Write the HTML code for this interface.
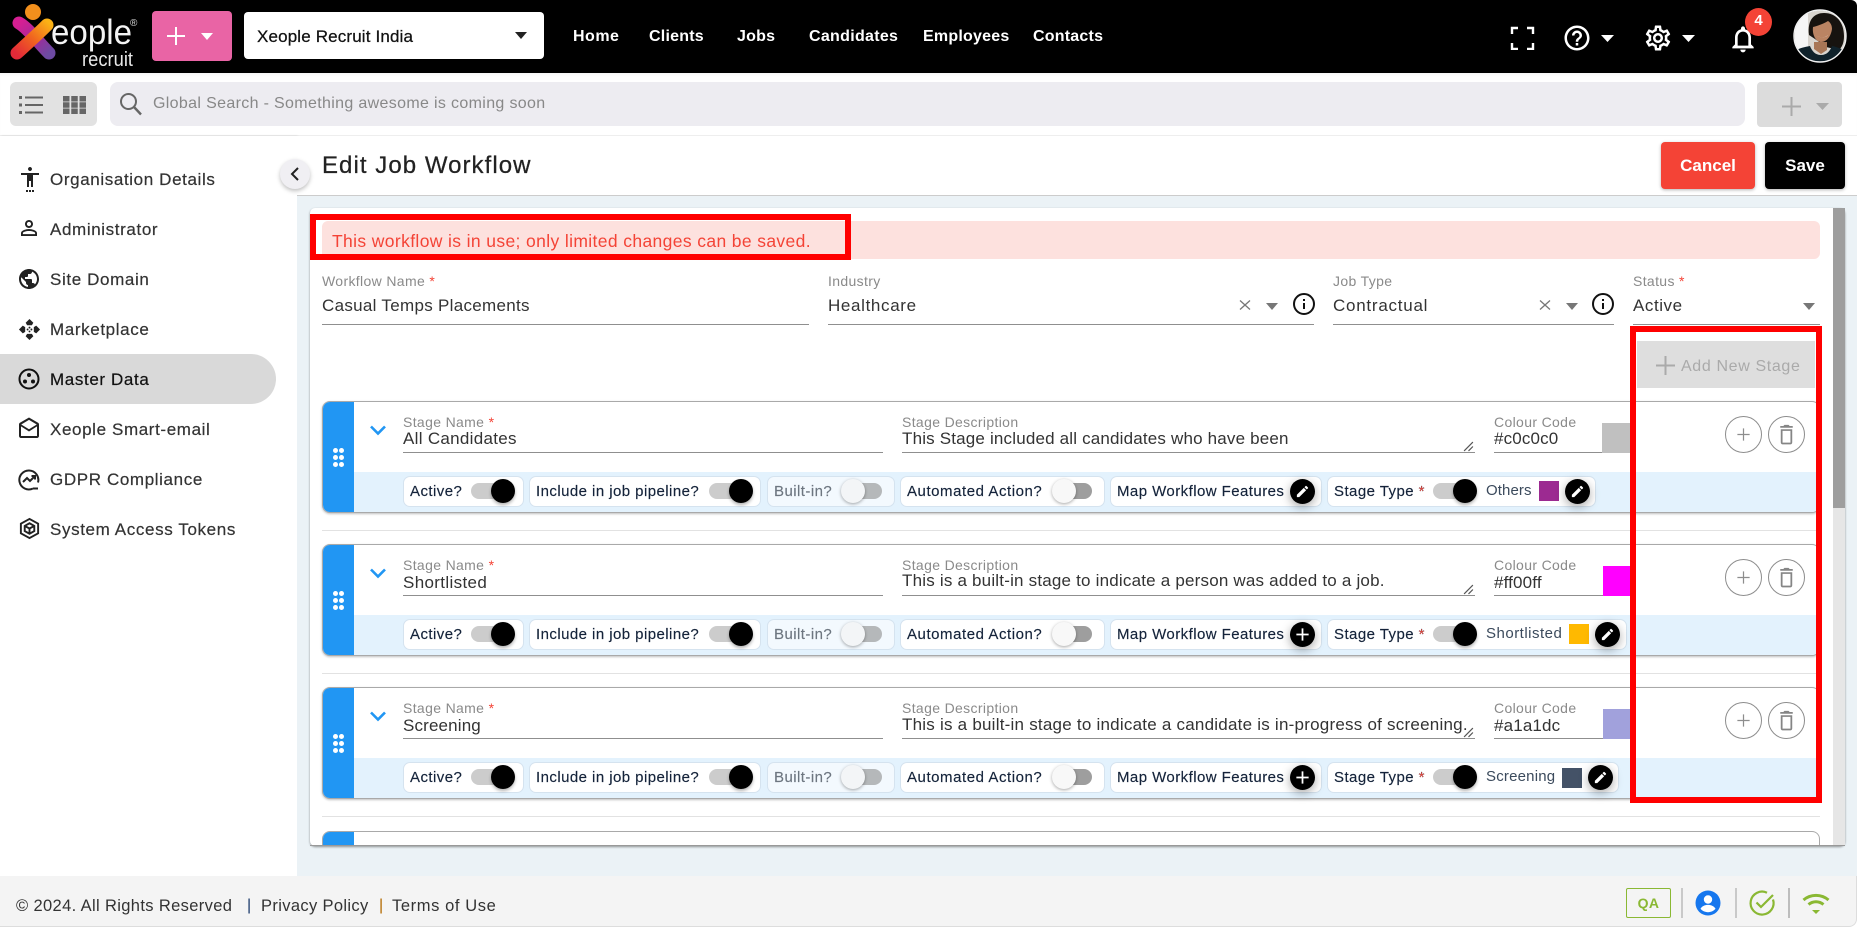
<!DOCTYPE html>
<html><head><meta charset="utf-8"><title>Edit Job Workflow</title>
<style>
html,body{margin:0;padding:0;width:1860px;height:927px;overflow:hidden;background:#fff;font-family:"Liberation Sans",Arial,sans-serif;color:#222}
div,span,svg{box-sizing:border-box}
.a,.t,.s>*,svg.i{position:absolute}
.t{white-space:nowrap;line-height:20px;height:20px}
.m{-webkit-text-stroke:.25px currentColor}
.nav{color:#fff;font-size:16px;font-weight:bold;top:27px;letter-spacing:.22px}
.side{font-size:17px;letter-spacing:.62px;color:#333;left:50px;-webkit-text-stroke:.2px #333}
.lab{font-size:14px;letter-spacing:.35px;color:#8a8a8a}
.val{font-size:17px;letter-spacing:.15px;color:#333}
.star{color:#f44336}
.ul{position:absolute;height:1px;background:#8f8f8f}
.s{position:absolute;left:0;width:1860px;height:0}
.card{left:322px;top:401px;width:1498px;height:112px;border:1px solid #a9a9a9;border-radius:8px;background:#fff;box-shadow:0 1px 2px rgba(0,0,0,.25);overflow:hidden}
.strip{position:absolute;left:0;top:0;bottom:0;width:31px;background:#2196f3}
.band{position:absolute;left:31px;right:0;top:70px;bottom:0;background:#e3f2fd}
.dot{width:5px;height:5px;border-radius:50%;background:#fff}
.pill{top:476px;height:31px;background:#fff;border:1px solid #d5e3ef;border-radius:7px}
.ptx{font-size:15px;letter-spacing:.44px;color:#14233a;top:482px;-webkit-text-stroke:.15px #14233a}
.stx{top:481px;font-size:15px;color:#3b4a5c}
.tr{height:16px;top:483px;border-radius:8px;background:#ccc}
.th{width:24px;height:24px;top:479px;border-radius:50%;background:#000;box-shadow:0 2px 3px rgba(0,0,0,.3)}
.off{background:#f8f8f8;box-shadow:0 1px 3px rgba(0,0,0,.35)}
.ed{width:25px;height:25px;top:479px;border-radius:50%;background:#000;box-shadow:0 3px 10px rgba(0,0,0,.35)}
.rd{width:37px;height:37px;top:416px;border:1px solid #8d8d8d;border-radius:50%;background:#fff}
.sep{left:322px;width:1498px;height:1px;background:#e2e2e2}
.red{position:absolute;border:6px solid #f00}
</style></head>
<body>
<svg width="0" height="0" style="position:absolute">
<defs>
<symbol id="edit" viewBox="0 0 24 24"><path fill="#fff" d="M3 17.25V21h3.75L17.81 9.94l-3.75-3.75L3 17.25zM20.71 7.04c.39-.39.39-1.02 0-1.41l-2.34-2.34c-.39-.39-1.02-.39-1.41 0l-1.83 1.83 3.75 3.75 1.83-1.83z"/></symbol>
<symbol id="plus" viewBox="0 0 24 24"><path fill="#fff" d="M19 13h-6v6h-2v-6H5v-2h6V5h2v6h6v2z"/></symbol>
<symbol id="gplus" viewBox="0 0 24 24"><path fill="#8d8d8d" d="M19 12.7h-6.3V19h-1.4v-6.3H5v-1.4h6.3V5h1.4v6.3H19z"/></symbol>
<symbol id="trash" viewBox="0 0 24 24"><path fill="#858585" d="M6.5 19.500c0 1.100.8 2 1.800 2h7.400c1 0 1.800-.9 1.800-2V7h-11zM8.200 8.500h7.600v11.300H8.200zM15 3.800l-1-1h-4l-1 1H6v1.700h12V3.800z"/></symbol>
<symbol id="chev" viewBox="0 0 24 24"><path fill="none" stroke="#2196f3" stroke-width="2.6" d="M5 8.500l7 7 7-7"/></symbol>
<symbol id="info" viewBox="0 0 24 24"><circle cx="12" cy="12" r="10" fill="none" stroke="#111" stroke-width="2"/><path fill="#111" d="M11 11h2v6h-2zM11 7h2v2h-2z"/></symbol>
<symbol id="rz" viewBox="0 0 10 10"><path stroke="#555" stroke-width="1.1" d="M1 9L9 1M5 9l4-4"/></symbol>
<symbol id="clr" viewBox="0 0 12 10"><path stroke="#777" stroke-width="1.300" d="M1 .5l10 9M11 .5l-10 9"/></symbol>
</defs>
</svg>

<!-- header -->
<div class="a" style="left:0;top:0;width:1857px;height:73px;background:#000;border-top-right-radius:6px"></div>
<svg class="i" style="left:0;top:0" width="145" height="73" viewBox="0 0 145 73">
<defs>
<linearGradient id="g1" x1="0" y1="0" x2="1" y2="1"><stop offset="0" stop-color="#d61f93"/><stop offset=".55" stop-color="#a02a9b"/><stop offset="1" stop-color="#6d4aa3"/></linearGradient>
<linearGradient id="g2" gradientUnits="userSpaceOnUse" x1="48" y1="22" x2="17" y2="54"><stop offset="0" stop-color="#fbb215"/><stop offset=".5" stop-color="#f0651f"/><stop offset="1" stop-color="#e32a38"/></linearGradient>
</defs>
<path d="M19 23C28 28 38 42 49 53" stroke="url(#g1)" stroke-width="13" stroke-linecap="round" fill="none"/>
<path d="M47 25C38 34 28 43 17 53" stroke="url(#g2)" stroke-width="13" stroke-linecap="round" fill="none"/>
<circle cx="33" cy="12" r="8" fill="#f28f1c"/>
<text x="51" y="44" font-family="Liberation Sans" font-size="35" fill="#f4f4f4" textLength="81" lengthAdjust="spacingAndGlyphs">eople</text>
<text x="130" y="26" font-family="Liberation Sans" font-size="10" fill="#ddd">®</text>
<text x="82" y="66" font-family="Liberation Sans" font-size="20" fill="#e8e8e8" textLength="51" lengthAdjust="spacingAndGlyphs">recruit</text>
</svg>
<div class="a" style="left:152px;top:11px;width:80px;height:50px;background:#e964a5;border-radius:4px"></div>
<svg class="i" style="left:166px;top:26px" width="20" height="20" viewBox="0 0 20 20"><path fill="#fff" d="M9 1h2v8h8v2h-8v8H9v-8H1V9h8z"/></svg>
<svg class="i" style="left:200px;top:33px" width="14" height="8" viewBox="0 0 14 8"><path fill="#fff" d="M1 0h12L7 7z"/></svg>
<div class="a" style="left:244px;top:12px;width:300px;height:47px;background:#fff;border-radius:4px"></div>
<div class="t m" style="left:257px;top:27px;font-size:17px;letter-spacing:.15px;color:#111">Xeople Recruit India</div>
<svg class="i" style="left:514px;top:32px" width="14" height="8" viewBox="0 0 14 8"><path fill="#222" d="M1 0h12L7 7z"/></svg>
<div class="t nav" style="left:573px;letter-spacing:.5px">Home</div>
<div class="t nav" style="left:649px">Clients</div>
<div class="t nav" style="left:737px">Jobs</div>
<div class="t nav" style="left:809px;letter-spacing:.3px">Candidates</div>
<div class="t nav" style="left:923px">Employees</div>
<div class="t nav" style="left:1033px">Contacts</div>
<svg class="i" style="left:1510px;top:26px" width="25" height="24" viewBox="0 0 25 24"><path fill="none" stroke="#fff" stroke-width="2.4" d="M2 8V2h6M17 2h6v6M23 17v6h-6M8 23H2v-6"/></svg>
<svg class="i" style="left:1562px;top:23px" width="30" height="30" viewBox="0 0 24 24"><path fill="#fff" d="M11 18h2v-2h-2v2zm1-16C6.48 2 2 6.48 2 12s4.48 10 10 10 10-4.48 10-10S17.52 2 12 2zm0 18c-4.41 0-8-3.59-8-8s3.59-8 8-8 8 3.59 8 8-3.59 8-8 8zm0-14c-2.21 0-4 1.79-4 4h2c0-1.1.9-2 2-2s2 .9 2 2c0 2-3 1.75-3 5h2c0-2.25 3-2.5 3-5 0-2.21-1.79-4-4-4z"/></svg>
<svg class="i" style="left:1601px;top:35px" width="13" height="7" viewBox="0 0 13 7"><path fill="#fff" d="M0 0h13L6.5 7z"/></svg>
<svg class="i" style="left:1643px;top:23px" width="30" height="30" viewBox="0 0 24 24"><path fill="#fff" d="M19.43 12.98c.04-.32.07-.64.07-.98 0-.34-.03-.66-.07-.98l2.11-1.65c.19-.15.24-.42.12-.64l-2-3.46c-.09-.16-.26-.25-.44-.25-.06 0-.12.01-.17.03l-2.49 1c-.52-.4-1.08-.73-1.69-.98l-.38-2.65C14.46 2.18 14.25 2 14 2h-4c-.25 0-.46.18-.49.42l-.38 2.65c-.61.25-1.17.59-1.69.98l-2.49-1c-.06-.02-.12-.03-.18-.03-.17 0-.34.09-.43.25l-2 3.46c-.13.22-.07.49.12.64l2.11 1.65c-.04.32-.07.65-.07.98 0 .33.03.66.07.98l-2.11 1.65c-.19.15-.24.42-.12.64l2 3.46c.09.16.26.25.44.25.06 0 .12-.01.17-.03l2.49-1c.52.4 1.08.73 1.69.98l.38 2.65c.03.24.24.42.49.42h4c.25 0 .46-.18.49-.42l.38-2.65c.61-.25 1.17-.59 1.69-.98l2.49 1c.06.02.12.03.18.03.17 0 .34-.09.43-.25l2-3.46c.12-.22.07-.49-.12-.64l-2.11-1.65zm-1.98-1.71c.04.31.05.52.05.73 0 .21-.02.43-.05.73l-.14 1.13.89.7 1.08.84-.7 1.21-1.27-.51-1.04-.42-.9.68c-.43.32-.84.56-1.25.73l-1.06.43-.16 1.13-.2 1.35h-1.4l-.19-1.35-.16-1.13-1.06-.43c-.43-.18-.83-.41-1.23-.71l-.91-.7-1.06.43-1.27.51-.7-1.21 1.08-.84.89-.7-.14-1.13c-.03-.31-.05-.54-.05-.74s.02-.43.05-.73l.14-1.13-.89-.7-1.08-.84.7-1.21 1.27.51 1.04.42.9-.68c.43-.32.84-.56 1.25-.73l1.06-.43.16-1.13.2-1.35h1.39l.19 1.35.16 1.13 1.06.43c.43.18.83.41 1.23.71l.91.7 1.06-.43 1.27-.51.7 1.21-1.07.85-.89.7.14 1.13zM12 8c-2.21 0-4 1.79-4 4s1.79 4 4 4 4-1.79 4-4-1.79-4-4-4zm0 6c-1.1 0-2-.9-2-2s.9-2 2-2 2 .9 2 2-.9 2-2 2z"/></svg>
<svg class="i" style="left:1682px;top:35px" width="13" height="7" viewBox="0 0 13 7"><path fill="#fff" d="M0 0h13L6.5 7z"/></svg>
<svg class="i" style="left:1727px;top:23px" width="32" height="32" viewBox="0 0 24 24"><path fill="#fff" d="M12 22c1.1 0 2-.9 2-2h-4c0 1.1.9 2 2 2zm6-6v-5c0-3.07-1.63-5.64-4.5-6.32V4c0-.83-.67-1.5-1.5-1.5s-1.5.67-1.5 1.5v.68C7.64 5.36 6 7.92 6 11v5l-2 2v1h16v-1l-2-2zm-2 1H8v-6c0-2.48 1.51-4.5 4-4.5s4 2.02 4 4.5v6z"/></svg>
<div class="a" style="left:1745px;top:8px;width:27px;height:28px;border-radius:50%;background:#f44336"></div>
<div class="t" style="left:1745px;top:11px;width:27px;text-align:center;color:#fff;font-weight:bold;font-size:15px">4</div>
<svg class="i" style="left:1793px;top:9px" width="54" height="54" viewBox="0 0 54 54">
<defs><clipPath id="av"><circle cx="27" cy="27" r="25.5"/></clipPath></defs>
<g clip-path="url(#av)"><rect width="54" height="54" fill="#d9d5cf"/><rect x="2" y="4" width="13" height="36" fill="#f6f6f6"/>
<path d="M16 26C14 10 22 4 31 4c12 0 20 9 20 23 0 7-2 11-5 14L33 38 22 30z" fill="#17130f"/>
<path d="M20 18c4-1 10-3 15-6 3 2 4 5 4 8-1 7-5 13-11 13-5 0-9-7-8-15z" fill="#bb8463"/>
<path d="M23 26c3 3 9 3 12 0-2 3-9 3-12 0z" fill="#fff"/>
<path d="M21 33h13v8l-6 4-7-5z" fill="#a87656"/>
<path d="M2 54V42c4-3 10-4 15-5 2 5 5 9 11 9s9-4 11-9c5 1 10 3 13 5v12z" fill="#10222b"/></g>
<circle cx="27" cy="27" r="26" fill="none" stroke="#f2f2f2" stroke-width="1.4"/></svg>

<!-- toolbar -->
<div class="a" style="left:0;top:73px;width:1857px;height:63px;background:#fff;border-bottom:1px solid #eee;box-shadow:inset 0 3px 3px -2px rgba(0,0,0,.06)"></div>
<div class="a" style="left:10px;top:82px;width:87px;height:44px;background:#e2e2e2;border-radius:6px"></div>
<svg class="i" style="left:19px;top:96px" width="24" height="18" viewBox="0 0 24 18"><path fill="#666" d="M0 0h3v3H0zM6 .5h18v2H6zM0 7.500h3v3H0zM6 8h18v2H6zM0 15h3v3H0zM6 15.500h18v2H6z"/></svg>
<svg class="i" style="left:63px;top:96px" width="23" height="18" viewBox="0 0 23 18"><path fill="#666" d="M0 0h6.500v5.500H0zM8.250 0h6.500v5.500h-6.500zM16.500 0H23v5.500h-6.500zM0 6.250h6.500v5.500H0zM8.250 6.250h6.500v5.500h-6.500zM16.500 6.250H23v5.500h-6.500zM0 12.500h6.500V18H0zM8.250 12.500h6.500V18h-6.500zM16.500 12.500H23V18h-6.500z"/></svg>
<div class="a" style="left:110px;top:82px;width:1635px;height:44px;background:#edecf1;border-radius:8px"></div>
<svg class="i" style="left:119px;top:92px" width="24" height="24" viewBox="0 0 24 24"><circle cx="9.500" cy="9.500" r="7.500" fill="none" stroke="#666" stroke-width="2"/><path d="M15 15l7 7.500" stroke="#666" stroke-width="2.400"/></svg>
<div class="t" style="left:153px;top:94px;font-size:16px;letter-spacing:.34px;color:#888">Global Search - Something awesome is coming soon</div>
<div class="a" style="left:1757px;top:82px;width:85px;height:45px;background:#dcdcdc;border-radius:4px"></div>
<svg class="i" style="left:1782px;top:97px" width="19" height="19" viewBox="0 0 19 19"><path fill="#aaa" d="M8.500 0h2v8.500H19v2h-8.500V19h-2v-8.500H0v-2h8.500z"/></svg>
<svg class="i" style="left:1816px;top:103px" width="13" height="7" viewBox="0 0 13 7"><path fill="#aaa" d="M0 0h13L6.500 7z"/></svg>

<!-- sidebar -->
<div class="a" style="left:0;top:136px;width:297px;height:740px;background:#fff;box-shadow:1px 0 2px rgba(0,0,0,.12)"></div>
<div class="a" style="left:0;top:354px;width:276px;height:50px;background:#d9d9d9;border-radius:0 25px 25px 0"></div>
<svg class="i" style="left:18px;top:165px" width="24" height="28" viewBox="0 0 24 28"><path fill="#222" d="M12 2c1.100 0 2 .9 2 2s-.9 2-2 2-2-.9-2-2 .9-2 2-2zm9 6v2h-6v12h-2v-6h-2v6H9V10H3V8z"/><path fill="#222" d="M8 25h2v2H8zM11 25h2v2h-2zM14 25h2v2h-2z"/></svg>
<div class="t side" style="top:170px">Organisation Details</div>
<svg class="i" style="left:17px;top:216px" width="24" height="24" viewBox="0 0 24 24"><path fill="#222" d="M12 5.900c1.160 0 2.100.94 2.100 2.100s-.94 2.100-2.100 2.100S9.900 9.160 9.900 8s.94-2.100 2.100-2.100M12 4C9.790 4 8 5.790 8 8s1.790 4 4 4 4-1.790 4-4-1.790-4-4-4zm0 9c-2.670 0-8 1.340-8 4v3h16v-3c0-2.660-5.330-4-8-4zm0 2c2.970 0 6.100 1.100 6.100 2v1.100H5.900V17c0-.9 3.130-2 6.100-2z"/></svg>
<div class="t side" style="top:220px">Administrator</div>
<svg class="i" style="left:17px;top:267px" width="24" height="24" viewBox="0 0 24 24"><path fill="#222" d="M12 2C6.480 2 2 6.480 2 12s4.480 10 10 10 10-4.480 10-10S17.520 2 12 2zm-1 17.930c-3.950-.49-7-3.850-7-7.930 0-.62.08-1.210.21-1.790L9 15v1c0 1.100.9 2 2 2v1.930zm6.900-2.540c-.26-.81-1-1.390-1.900-1.390h-1v-3c0-.55-.45-1-1-1H8v-2h2c.55 0 1-.45 1-1V7h2c1.100 0 2-.9 2-2v-.41c2.930 1.190 5 4.060 5 7.410 0 2.080-.8 3.970-2.100 5.390z"/></svg>
<div class="t side" style="top:270px">Site Domain</div>
<svg class="i" style="left:18px;top:318px" width="23" height="23" viewBox="0 0 24 24"><path fill="#222" d="M12 1l4 4-1.500 2.500h-5L8 5zM12 23l-4-4 1.500-2.500h5L16 19zM1 12l4-4 2.500 1.500v5L5 16zM23 12l-4 4-2.500-1.500v-5L19 8z"/><circle cx="12" cy="10" r="1" fill="#222"/><circle cx="12" cy="14" r="1" fill="#222"/><circle cx="10" cy="12" r="1" fill="#222"/><circle cx="14" cy="12" r="1" fill="#222"/></svg>
<div class="t side" style="top:320px">Marketplace</div>
<svg class="i" style="left:17px;top:367px" width="24" height="24" viewBox="0 0 24 24"><circle cx="12" cy="12" r="9.500" fill="none" stroke="#111" stroke-width="2"/><circle cx="12" cy="8" r="2" fill="#111"/><circle cx="8" cy="14.500" r="2" fill="#111"/><circle cx="16" cy="14.500" r="2" fill="#111"/></svg>
<div class="t side" style="top:370px;color:#111;-webkit-text-stroke:.2px #111">Master Data</div>
<svg class="i" style="left:17px;top:416px" width="24" height="24" viewBox="0 0 24 24"><path fill="#222" d="M22 8.500c0-.72-.37-1.350-.94-1.700L12 1.500 2.950 6.800C2.380 7.150 2 7.780 2 8.500V20c0 1.100.9 2 2 2h16c1.100 0 2-.9 2-2zM20 20H4V10.400l8 5.100 8-5.100zm-8-6.700L4.240 8.480 12 3.820l7.760 4.660z"/></svg>
<div class="t side" style="top:420px">Xeople Smart-email</div>
<svg class="i" style="left:17px;top:467px" width="24" height="24" viewBox="0 0 24 24"><path fill="none" stroke="#222" stroke-width="2" d="M21 15.500A9.500 9.500 0 1 0 16 21.500M21 21.500h-5"/><path fill="none" stroke="#222" stroke-width="2" d="M6 15l4-4 3 3 5-5M14.500 9H18v3.500"/></svg>
<div class="t side" style="top:470px">GDPR Compliance</div>
<svg class="i" style="left:18px;top:517px" width="23" height="23" viewBox="0 0 24 24"><path fill="none" stroke="#222" stroke-width="2" d="M12 2l9 5v10l-9 5-9-5V7zM12 6.500l5 2.800v5.400l-5 2.800-5-2.800V9.300zM12 12l5-2.700M12 12v5.500M12 12L7 9.300"/></svg>
<div class="t side" style="top:520px">System Access Tokens</div>

<!-- title bar -->
<div class="a" style="left:297px;top:136px;width:1560px;height:60px;background:#fff;border-bottom:1px solid #ccc"></div>
<div class="t m" style="left:322px;top:156px;font-size:24px;letter-spacing:1.05px;color:#222">Edit Job Workflow</div>
<div class="a" style="left:1661px;top:142px;width:94px;height:47px;background:#f44336;border-radius:4px;box-shadow:0 1px 3px rgba(0,0,0,.3)"></div>
<div class="t" style="left:1661px;top:156px;width:94px;text-align:center;color:#fff;font-weight:bold;font-size:17px">Cancel</div>
<div class="a" style="left:1765px;top:142px;width:80px;height:47px;background:#000;border-radius:4px;box-shadow:0 1px 3px rgba(0,0,0,.3)"></div>
<div class="t" style="left:1765px;top:156px;width:80px;text-align:center;color:#fff;font-weight:bold;font-size:17px">Save</div>
<div class="a" style="left:280px;top:159px;width:30px;height:30px;border-radius:50%;background:#f0eff3;box-shadow:0 2px 4px rgba(0,0,0,.25)"></div>
<svg class="i" style="left:289px;top:166px" width="12" height="16" viewBox="0 0 12 16"><path d="M9 2L3 8l6 6" fill="none" stroke="#222" stroke-width="2"/></svg>

<!-- content -->
<div class="a" style="left:297px;top:196px;width:1560px;height:680px;background:#ebf2f6"></div>
<div class="a" style="left:310px;top:208px;width:1535px;height:638px;background:#fff;border-radius:5px;box-shadow:0 1px 2px rgba(0,0,0,.4)"></div>
<div class="a" style="left:1833px;top:208px;width:12px;height:638px;background:#e6e6e6"></div>
<div class="a" style="left:1833px;top:208px;width:12px;height:300px;background:#9e9e9e"></div>

<div class="a" style="left:322px;top:221px;width:1498px;height:38px;background:#fde1de;border-radius:6px"></div>
<div class="t" style="left:332px;top:231px;font-size:17.500px;letter-spacing:.37px;color:#f44336">This workflow is in use; only limited changes can be saved.</div>

<div class="t lab" style="left:322px;top:271px">Workflow Name <span class="star">*</span></div>
<div class="t val" style="left:322px;top:296px;letter-spacing:.3px">Casual Temps Placements</div>
<div class="ul" style="left:322px;top:324px;width:487px"></div>
<div class="t lab" style="left:828px;top:271px">Industry</div>
<div class="t val" style="left:828px;top:296px;letter-spacing:.65px">Healthcare</div>
<div class="ul" style="left:828px;top:324px;width:486px"></div>
<svg class="i" style="left:1239px;top:300px" width="12" height="10"><use href="#clr"/></svg>
<svg class="i" style="left:1266px;top:303px" width="12" height="7" viewBox="0 0 12 7"><path fill="#777" d="M0 0h12L6 7z"/></svg>
<svg class="i" style="left:1292px;top:292px" width="24" height="24"><use href="#info"/></svg>
<div class="t lab" style="left:1333px;top:271px">Job Type</div>
<div class="t val" style="left:1333px;top:296px;letter-spacing:.75px">Contractual</div>
<div class="ul" style="left:1333px;top:324px;width:281px"></div>
<svg class="i" style="left:1539px;top:300px" width="12" height="10"><use href="#clr"/></svg>
<svg class="i" style="left:1566px;top:303px" width="12" height="7" viewBox="0 0 12 7"><path fill="#777" d="M0 0h12L6 7z"/></svg>
<svg class="i" style="left:1591px;top:292px" width="24" height="24"><use href="#info"/></svg>
<div class="t lab" style="left:1633px;top:271px">Status <span class="star">*</span></div>
<div class="t val" style="left:1633px;top:296px;letter-spacing:.55px">Active</div>
<div class="ul" style="left:1633px;top:324px;width:187px"></div>
<svg class="i" style="left:1803px;top:303px" width="12" height="7" viewBox="0 0 12 7"><path fill="#777" d="M0 0h12L6 7z"/></svg>

<div class="a" style="left:1637px;top:341px;width:178px;height:47px;background:#dedede"></div>
<svg class="i" style="left:1656px;top:356px" width="19" height="19" viewBox="0 0 19 19"><path fill="#aaa" d="M8.500 0h2v8.500H19v2h-8.500V19h-2v-8.500H0v-2h8.500z"/></svg>
<div class="t" style="left:1681px;top:357px;font-size:16px;letter-spacing:.64px;color:#aaa">Add New Stage</div>

<!-- stage 1 -->
<div class="s" style="top:0">
<div class="card"><div class="strip"></div><div class="band"></div></div>
<svg style="left:366px;top:418px" width="24" height="24"><use href="#chev"/></svg>
<div class="dot" style="left:333px;top:448px"></div><div class="dot" style="left:339px;top:448px"></div>
<div class="dot" style="left:333px;top:455px"></div><div class="dot" style="left:339px;top:455px"></div>
<div class="dot" style="left:333px;top:462px"></div><div class="dot" style="left:339px;top:462px"></div>
<div class="t lab" style="left:403px;top:412px">Stage Name <span class="star">*</span></div>
<div class="t val" style="left:403px;top:429px;letter-spacing:.3px">All Candidates</div>
<div class="ul" style="left:403px;top:452px;width:480px"></div>
<div class="t lab" style="left:902px;top:412px">Stage Description</div>
<div class="t val" style="left:902px;top:429px;letter-spacing:.18px">This Stage included all candidates who have been</div>
<svg style="left:1463px;top:441px" width="11" height="11"><use href="#rz"/></svg>
<div class="ul" style="left:902px;top:452px;width:573px"></div>
<div class="t lab" style="left:1494px;top:412px">Colour Code</div>
<div class="t val" style="left:1494px;top:429px">#c0c0c0</div>
<div class="ul" style="left:1494px;top:452px;width:136px"></div>
<div style="left:1602px;top:423px;width:28px;height:30px;background:#c0c0c0"></div>
<div class="rd" style="left:1725px"></div><svg style="left:1733px;top:424px" width="21" height="21"><use href="#gplus"/></svg>
<div class="rd" style="left:1768px"></div><svg style="left:1774px;top:422px" width="25" height="25"><use href="#trash"/></svg>
<div class="pill" style="left:403px;width:121px"></div>
<div class="t ptx" style="left:410px">Active?</div>
<div class="tr" style="left:471px;width:38px"></div><div class="th" style="left:491px"></div>
<div class="pill" style="left:529px;width:232px"></div>
<div class="t ptx" style="left:536px">Include in job pipeline?</div>
<div class="tr" style="left:709px;width:38px"></div><div class="th" style="left:729px"></div>
<div class="pill" style="left:767px;width:128px;background:#f3f9fe"></div>
<div class="t ptx" style="left:774px;color:#6d7680;-webkit-text-stroke:.15px #6d7680">Built-in?</div>
<div class="tr" style="left:845px;width:37px;background:#b5b8ba"></div><div class="th off" style="left:841px;background:#f3f5f7"></div>
<div class="pill" style="left:900px;width:205px"></div>
<div class="t ptx" style="left:907px;letter-spacing:.55px">Automated Action?</div>
<div class="tr" style="left:1060px;width:32px;background:#9e9e9e"></div><div class="th off" style="left:1052px"></div>
<div class="pill" style="left:1110px;width:212px"></div>
<div class="t ptx" style="left:1117px">Map Workflow Features</div>
<div class="ed" style="left:1290px"></div><svg style="left:1295px;top:484px" width="15" height="15"><use href="#edit"/></svg>
<div class="pill" style="left:1327px;width:269px"></div>
<div class="t ptx" style="left:1334px">Stage Type <span class="star">*</span></div>
<div class="tr" style="left:1433px;width:38px"></div><div class="th" style="left:1453px"></div>
<div class="t stx" style="left:1486px;letter-spacing:.1px">Others</div>
<div style="left:1539px;top:481px;width:20px;height:20px;background:#9c2a91"></div>
<div class="ed" style="left:1565px"></div><svg style="left:1570px;top:484px" width="15" height="15"><use href="#edit"/></svg>
</div>
<div class="a sep" style="top:530px"></div>

<!-- stage 2 -->
<div class="s" style="top:143px">
<div class="card"><div class="strip"></div><div class="band"></div></div>
<svg style="left:366px;top:418px" width="24" height="24"><use href="#chev"/></svg>
<div class="dot" style="left:333px;top:448px"></div><div class="dot" style="left:339px;top:448px"></div>
<div class="dot" style="left:333px;top:455px"></div><div class="dot" style="left:339px;top:455px"></div>
<div class="dot" style="left:333px;top:462px"></div><div class="dot" style="left:339px;top:462px"></div>
<div class="t lab" style="left:403px;top:412px">Stage Name <span class="star">*</span></div>
<div class="t val" style="left:403px;top:430px;letter-spacing:.35px">Shortlisted</div>
<div class="ul" style="left:403px;top:452px;width:480px"></div>
<div class="t lab" style="left:902px;top:412px">Stage Description</div>
<div class="t val" style="left:902px;top:428px;letter-spacing:.2px">This is a built-in stage to indicate a person was added to a job.</div>
<svg style="left:1463px;top:441px" width="11" height="11"><use href="#rz"/></svg>
<div class="ul" style="left:902px;top:452px;width:573px"></div>
<div class="t lab" style="left:1494px;top:412px">Colour Code</div>
<div class="t val" style="left:1494px;top:430px">#ff00ff</div>
<div class="ul" style="left:1494px;top:452px;width:136px"></div>
<div style="left:1603px;top:423px;width:27px;height:30px;background:#ff00ff"></div>
<div class="rd" style="left:1725px"></div><svg style="left:1733px;top:424px" width="21" height="21"><use href="#gplus"/></svg>
<div class="rd" style="left:1768px"></div><svg style="left:1774px;top:422px" width="25" height="25"><use href="#trash"/></svg>
<div class="pill" style="left:403px;width:121px"></div>
<div class="t ptx" style="left:410px">Active?</div>
<div class="tr" style="left:471px;width:38px"></div><div class="th" style="left:491px"></div>
<div class="pill" style="left:529px;width:232px"></div>
<div class="t ptx" style="left:536px">Include in job pipeline?</div>
<div class="tr" style="left:709px;width:38px"></div><div class="th" style="left:729px"></div>
<div class="pill" style="left:767px;width:128px;background:#f3f9fe"></div>
<div class="t ptx" style="left:774px;color:#6d7680;-webkit-text-stroke:.15px #6d7680">Built-in?</div>
<div class="tr" style="left:845px;width:37px;background:#b5b8ba"></div><div class="th off" style="left:841px;background:#f3f5f7"></div>
<div class="pill" style="left:900px;width:205px"></div>
<div class="t ptx" style="left:907px;letter-spacing:.55px">Automated Action?</div>
<div class="tr" style="left:1060px;width:32px;background:#9e9e9e"></div><div class="th off" style="left:1052px"></div>
<div class="pill" style="left:1110px;width:212px"></div>
<div class="t ptx" style="left:1117px">Map Workflow Features</div>
<div class="ed" style="left:1290px"></div><svg style="left:1292px;top:481px" width="21" height="21"><use href="#plus"/></svg>
<div class="pill" style="left:1327px;width:300px"></div>
<div class="t ptx" style="left:1334px">Stage Type <span class="star">*</span></div>
<div class="tr" style="left:1433px;width:38px"></div><div class="th" style="left:1453px"></div>
<div class="t stx" style="left:1486px;letter-spacing:.5px">Shortlisted</div>
<div style="left:1569px;top:481px;width:20px;height:20px;background:#ffb900"></div>
<div class="ed" style="left:1595px"></div><svg style="left:1600px;top:484px" width="15" height="15"><use href="#edit"/></svg>
</div>
<div class="a sep" style="top:673px"></div>

<!-- stage 3 -->
<div class="s" style="top:286px">
<div class="card"><div class="strip"></div><div class="band"></div></div>
<svg style="left:366px;top:418px" width="24" height="24"><use href="#chev"/></svg>
<div class="dot" style="left:333px;top:448px"></div><div class="dot" style="left:339px;top:448px"></div>
<div class="dot" style="left:333px;top:455px"></div><div class="dot" style="left:339px;top:455px"></div>
<div class="dot" style="left:333px;top:462px"></div><div class="dot" style="left:339px;top:462px"></div>
<div class="t lab" style="left:403px;top:412px">Stage Name <span class="star">*</span></div>
<div class="t val" style="left:403px;top:430px">Screening</div>
<div class="ul" style="left:403px;top:452px;width:480px"></div>
<div class="t lab" style="left:902px;top:412px">Stage Description</div>
<div class="t val" style="left:902px;top:429px;letter-spacing:.23px">This is a built-in stage to indicate a candidate is in-progress of screening.</div>
<svg style="left:1463px;top:441px" width="11" height="11"><use href="#rz"/></svg>
<div class="ul" style="left:902px;top:452px;width:573px"></div>
<div class="t lab" style="left:1494px;top:412px">Colour Code</div>
<div class="t val" style="left:1494px;top:430px">#a1a1dc</div>
<div class="ul" style="left:1494px;top:452px;width:136px"></div>
<div style="left:1603px;top:423px;width:27px;height:30px;background:#a1a1dc"></div>
<div class="rd" style="left:1725px"></div><svg style="left:1733px;top:424px" width="21" height="21"><use href="#gplus"/></svg>
<div class="rd" style="left:1768px"></div><svg style="left:1774px;top:422px" width="25" height="25"><use href="#trash"/></svg>
<div class="pill" style="left:403px;width:121px"></div>
<div class="t ptx" style="left:410px">Active?</div>
<div class="tr" style="left:471px;width:38px"></div><div class="th" style="left:491px"></div>
<div class="pill" style="left:529px;width:232px"></div>
<div class="t ptx" style="left:536px">Include in job pipeline?</div>
<div class="tr" style="left:709px;width:38px"></div><div class="th" style="left:729px"></div>
<div class="pill" style="left:767px;width:128px;background:#f3f9fe"></div>
<div class="t ptx" style="left:774px;color:#6d7680;-webkit-text-stroke:.15px #6d7680">Built-in?</div>
<div class="tr" style="left:845px;width:37px;background:#b5b8ba"></div><div class="th off" style="left:841px;background:#f3f5f7"></div>
<div class="pill" style="left:900px;width:205px"></div>
<div class="t ptx" style="left:907px;letter-spacing:.55px">Automated Action?</div>
<div class="tr" style="left:1060px;width:32px;background:#9e9e9e"></div><div class="th off" style="left:1052px"></div>
<div class="pill" style="left:1110px;width:212px"></div>
<div class="t ptx" style="left:1117px">Map Workflow Features</div>
<div class="ed" style="left:1290px"></div><svg style="left:1292px;top:481px" width="21" height="21"><use href="#plus"/></svg>
<div class="pill" style="left:1327px;width:292px"></div>
<div class="t ptx" style="left:1334px">Stage Type <span class="star">*</span></div>
<div class="tr" style="left:1433px;width:38px"></div><div class="th" style="left:1453px"></div>
<div class="t stx" style="left:1486px;letter-spacing:.2px">Screening</div>
<div style="left:1562px;top:482px;width:20px;height:20px;background:#445267"></div>
<div class="ed" style="left:1588px"></div><svg style="left:1593px;top:484px" width="15" height="15"><use href="#edit"/></svg>
</div>
<div class="a sep" style="top:816px"></div>

<!-- stage 4 stub -->
<div class="a" style="left:322px;top:831px;width:1498px;height:15px;border:1px solid #a9a9a9;border-bottom:0;border-radius:8px 8px 0 0;overflow:hidden;background:#fff"><div style="position:absolute;left:0;top:0;width:31px;height:15px;background:#2196f3"></div></div>
<div class="a" style="left:310px;top:845px;width:1535px;height:1px;background:#999"></div>

<!-- red annotations -->
<div class="red" style="left:310px;top:214px;width:541px;height:46px"></div>
<div class="red" style="left:1630px;top:326px;width:192px;height:477px"></div>

<!-- footer -->
<div class="a" style="left:0;top:876px;width:1857px;height:51px;background:#f4f4f4;border-bottom:1px solid #ddd;border-right:1px solid #ddd;border-bottom-right-radius:8px"></div>
<div class="t" style="left:16px;top:896px;font-size:16.500px;letter-spacing:.36px;color:#333">© 2024. All Rights Reserved</div>
<div class="t" style="left:247px;top:896px;font-size:16px;color:#1b3a6b">|</div>
<div class="t" style="left:261px;top:896px;font-size:16.500px;letter-spacing:.35px;color:#333">Privacy Policy</div>
<div class="t" style="left:379px;top:896px;font-size:16px;color:#b26a00">|</div>
<div class="t" style="left:392px;top:896px;font-size:16.500px;letter-spacing:.6px;color:#333">Terms of Use</div>
<div class="a" style="left:1626px;top:888px;width:45px;height:30px;border:1.500px solid #8ab833;border-radius:2px"></div>
<div class="t" style="left:1626px;top:893px;width:45px;text-align:center;font-size:14px;font-weight:bold;letter-spacing:.4px;color:#8ab833">QA</div>
<div class="a" style="left:1681px;top:888px;width:2px;height:30px;background:#c9c9c9"></div>
<div class="a" style="left:1735px;top:888px;width:2px;height:30px;background:#c9c9c9"></div>
<div class="a" style="left:1788px;top:888px;width:2px;height:30px;background:#bdbdbd"></div>
<svg class="i" style="left:1695px;top:890px" width="26" height="26" viewBox="0 0 26 26"><circle cx="13" cy="13" r="12.500" fill="#1677ee"/><circle cx="13" cy="9.500" r="4.200" fill="#fff"/><path d="M5.500 18.800c1.300-2.600 4.500-3.900 7.500-3.900s6.200 1.300 7.500 3.900c-1.700 2.100-4.400 3.400-7.500 3.400s-5.800-1.300-7.500-3.400z" fill="#fff"/></svg>
<svg class="i" style="left:1748px;top:889px" width="28" height="28" viewBox="0 0 28 28"><path d="M25 10.500A11.500 11.500 0 1 1 19 3.700" fill="none" stroke="#8ab833" stroke-width="2.200"/><path d="M8.500 13.500l4.500 4.500 12-12" fill="none" stroke="#8ab833" stroke-width="2.200"/></svg>
<svg class="i" style="left:1802px;top:893px" width="28" height="21" viewBox="0 0 28 21"><path d="M1.500 7C8.500.8 19.500.8 26.500 7" fill="none" stroke="#8ab833" stroke-width="3"/><path d="M6.500 11.500c4.500-3.700 10.500-3.700 15 0" fill="none" stroke="#8ab833" stroke-width="3"/><path d="M10 17h8l-4 4z" fill="#8ab833"/></svg>
</body></html>
